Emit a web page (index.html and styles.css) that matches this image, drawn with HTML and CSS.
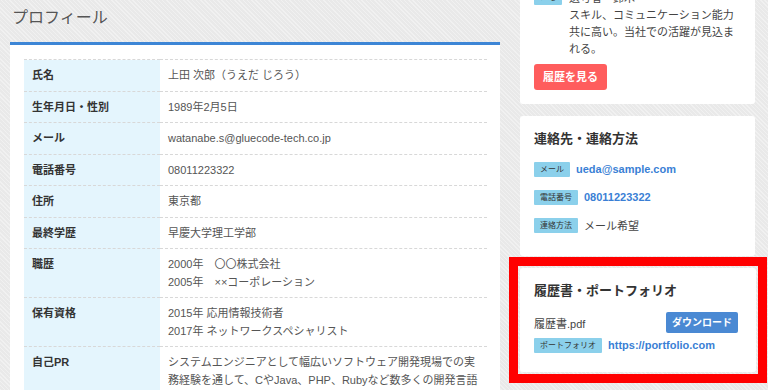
FILE: index.html
```
<!DOCTYPE html>
<html lang="ja">
<head>
	<meta charset="utf-8">
	<title>プロフィール</title>
	<link rel="stylesheet" href="styles.css">
</head>
<body>
	<div class="page">
		<!-- Profile column -->
		<div class="main">
			<h1 class="page-title">プロフィール</h1>
			<div class="panel">
				<table class="profile">
					<tr><th>氏名</th><td>上田 次郎（うえだ じろう）</td></tr>
					<tr><th>生年月日・性別</th><td>1989年2月5日</td></tr>
					<tr><th>メール</th><td>watanabe.s@gluecode-tech.co.jp</td></tr>
					<tr><th>電話番号</th><td>08011223322</td></tr>
					<tr><th>住所</th><td>東京都</td></tr>
					<tr><th>最終学歴</th><td>早慶大学理工学部</td></tr>
					<tr><th>職歴</th><td>2000年　〇〇株式会社<br>2005年　××コーポレーション</td></tr>
					<tr><th>保有資格</th><td>2015年 応用情報技術者<br>2017年 ネットワークスペシャリスト</td></tr>
					<tr><th>自己PR</th><td>システムエンジニアとして幅広いソフトウェア開発現場での実務経験を通して、CやJava、PHP、Rubyなど数多くの開発言語を習得しました。</td></tr>
				</table>
			</div>
		</div>

		<!-- Side column -->
		<div class="side">
			<div class="box">
				<div class="memo">
					<span class="tag">メモ</span>
					<p>選考者・鈴木<br>スキル、コミュニケーション能力共に高い。当社での活躍が見込まれる。</p>
				</div>
				<a class="btn btn-red" href="#">履歴を見る</a>
			</div>

			<div class="box contact">
				<h2>連絡先・連絡方法</h2>
				<div class="row"><span class="tag">メール</span><a class="link" href="#">ueda@sample.com</a></div>
				<div class="row"><span class="tag">電話番号</span><a class="link" href="#">08011223322</a></div>
				<div class="row"><span class="tag">連絡方法</span><span class="plain">メール希望</span></div>
			</div>

			<!-- highlighted box -->
			<div class="mark">
				<div class="box files">
					<h2>履歴書・ポートフォリオ</h2>
					<div class="row file-row"><span class="plain">履歴書.pdf</span><a class="btn btn-blue" href="#">ダウンロード</a></div>
					<div class="row"><span class="tag">ポートフォリオ</span><a class="link" href="#">https://portfolio.com</a></div>
				</div>
			</div>
		</div>
	</div>
</body>
</html>
```

FILE: styles.css
```
html, body {
	margin: 0;
	padding: 0;
	height: 390px;
	overflow: hidden;
	font-family: "Liberation Sans", "Noto Sans CJK JP", sans-serif;
	font-size: 11px;
	color: #555;
	background-color: #e9e9e9;
	background-image: repeating-linear-gradient(45deg, rgba(255,255,255,0.35) 0 1px, transparent 1px 3px);
}
a { text-decoration: none; }

.page { display: flex; align-items: flex-start; padding-left: 10px; }
.main { width: 490px; flex: none; }
.side { width: 235px; flex: none; margin-left: 20px; margin-top: -24px; display: flex; flex-direction: column; gap: 12px; }

.page-title { margin: 0 0 14px; padding: 8px 2px 0; font-size: 16px; line-height: 20px; font-weight: normal; color: #555; }

.panel { background: #fff; border-top: 3px solid #3d86d6; padding: 14px 13px 14px 14px; min-height: 400px; }
.profile { width: 100%; border-collapse: collapse; border-top: 1px dashed #d8d8d8; }
.profile th, .profile td { padding: 7px 6px 6px 8px; line-height: 17.5px; border-bottom: 1px dashed #d8d8d8; vertical-align: top; text-align: left; }
.profile th { width: 122px; background: #e4f5fd; color: #333; font-weight: bold; }
.profile td { color: #555; }

.box { background: #fff; border-radius: 3px; padding: 14px; }
.box h2 { margin: 0; font-size: 13px; line-height: 18px; color: #333; font-weight: bold; }

.tag { display: inline-block; flex: none; background: #8bd0eb; color: #333; font-size: 8px; line-height: 15px; height: 15px; padding: 0 6px; border-radius: 1px; }

.memo { display: flex; gap: 7px; align-items: flex-start; }
.memo p { margin: 0; line-height: 17px; color: #444; }

.btn { display: inline-block; font-weight: bold; color: #fff; border-radius: 3px; }
.btn-red { margin-top: 6px; background: #ff5d5d; font-size: 11px; line-height: 26px; padding: 0 9px; }
.btn-blue { background: #4a89d3; font-size: 10px; line-height: 21px; padding: 0 6px; border-radius: 2px; }

.row { display: flex; align-items: center; gap: 6px; height: 20px; }
.link { color: #3a7fd5; font-weight: bold; font-size: 11px; }
.plain { color: #444; font-size: 11px; }

.contact { padding-bottom: 21px; }
.contact h2 { margin-bottom: 11px; }
.contact .row + .row { margin-top: 8px; }

.mark { border: 9px solid #ff0000; padding: 2px; margin: -11px -12px 0 -11px; }
.files { padding-bottom: 17px; }
.files .file-row { justify-content: space-between; height: 21px; margin-top: 12px; padding-right: 4px; }
.files .file-row + .row { margin-top: 2px; }
```
